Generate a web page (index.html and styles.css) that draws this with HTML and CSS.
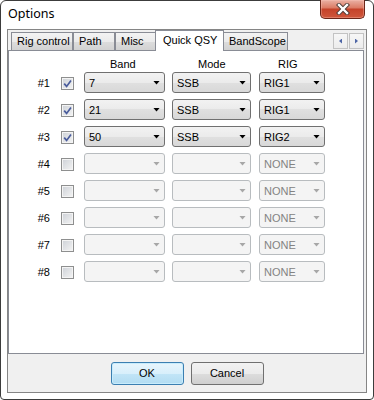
FILE: index.html
```html
<!DOCTYPE html>
<html>
<head>
    <title>Options</title>
    <link rel="stylesheet" href="styles.css">
</head>
<body>
    <div class="window">
        <div class="titlebar">
            <span class="title">Options</span>
            <button class="close">
                <svg width="14" height="12" viewBox="0 0 14 12">
                    <path d="M3 2 L11 10 M11 2 L3 10" stroke="#4b3a36" stroke-width="4.2" stroke-linecap="square" fill="none"/>
                    <path d="M3 2 L11 10 M11 2 L3 10" stroke="#ffffff" stroke-width="2.4" stroke-linecap="square" fill="none"/>
                </svg>
            </button>
        </div>

        <div class="client">
            <div class="tabs">
                <div class="tab w-rig">Rig control</div>
                <div class="tab w-path">Path</div>
                <div class="tab w-misc">Misc</div>
                <div class="tab selected">Quick QSY</div>
                <div class="tab w-band">BandScope</div>
                <div class="tab-scroll">
                    <span class="scroll-btn"><i class="arrow-left"></i></span>
                    <span class="scroll-btn"><i class="arrow-right"></i></span>
                </div>
            </div>

            <div class="panel">
                <div class="row head">
                    <span></span>
                    <span></span>
                    <span class="h-band">Band</span>
                    <span class="h-mode">Mode</span>
                    <span class="h-rig">RIG</span>
                </div>
                <div class="rows" id="rows"></div>
            </div>

            <div class="buttons">
                <button class="btn default">OK</button>
                <button class="btn">Cancel</button>
            </div>
        </div>
    </div>

    <script>
        // Quick QSY slots: the first three are set up, the rest are empty
        const slots = [
            { band: "7", mode: "SSB", rig: "RIG1", on: true },
            { band: "21", mode: "SSB", rig: "RIG1", on: true },
            { band: "50", mode: "SSB", rig: "RIG2", on: true },
            { band: "", mode: "", rig: "NONE", on: false },
            { band: "", mode: "", rig: "NONE", on: false },
            { band: "", mode: "", rig: "NONE", on: false },
            { band: "", mode: "", rig: "NONE", on: false },
            { band: "", mode: "", rig: "NONE", on: false }
        ];

        const tick = '<svg width="9" height="9" viewBox="0 0 9 9"><path d="M1.2 4.6 L3.6 7.4 L8 1.4" stroke="#4a5c9c" stroke-width="1.7" fill="none"/></svg>';

        function combo(cls, text, on) {
            return `<div class="combo ${cls}${on ? "" : " disabled"}"><span>${text}</span></div>`;
        }

        let html = "";
        slots.forEach((s, i) => {
            html += `<div class="row">
                <span class="num">#${i + 1}</span>
                <span class="check">${s.on ? tick : ""}</span>
                ${combo("c-band", s.band, s.on)}
                ${combo("c-mode", s.mode, s.on)}
                ${combo("c-rig", s.rig, s.on)}
            </div>`;
        });
        document.getElementById("rows").innerHTML = html;
    </script>
</body>
</html>
```

FILE: styles.css
```css
* {
    box-sizing: border-box;
}
body {
    margin: 0;
    background: #ffffff;
    font-family: "Liberation Sans", Arial, sans-serif;
    font-size: 11px;
    color: #000;
}
.window {
    width: 374px;
    height: 400px;
    border: 1px solid #3c3c3c;
    border-radius: 6px 6px 4px 4px;
    background: #ffffff;
    display: flex;
    flex-direction: column;
}
.titlebar {
    height: 28px;
    display: flex;
    justify-content: space-between;
    align-items: flex-start;
    padding-left: 7px;
}
.title {
    font-family: "Noto Sans", sans-serif;
    font-size: 12.5px;
    line-height: 1;
    margin-top: 7px;
}
.close {
    width: 45px;
    height: 19px;
    margin: -1px 8px 0 0;
    padding: 0;
    border: 1px solid #6b2619;
    border-top: none;
    border-radius: 0 0 5px 5px;
    background: linear-gradient(#eab1a4, #dc7d67 42%, #c5432a 52%, #cf573c);
    box-shadow: inset 0 0 0 1px rgba(255, 200, 190, 0.35);
    display: flex;
    align-items: center;
    justify-content: center;
}
.close svg {
    display: block;
}
.client {
    flex: 1;
    margin: 0 6px 6px;
    border: 1px solid #858585;
    background: #f0f0f0;
    display: flex;
    flex-direction: column;
}

/* tab strip */
.tabs {
    height: 20px;
    display: flex;
    align-items: flex-end;
    padding-left: 3px;
    margin-right: 2px;
}
.tab {
    height: 18px;
    border: 1px solid #898c95;
    border-bottom: none;
    background: linear-gradient(#f3f3f3, #ebebeb 50%, #dddddd 50%, #d2d2d2);
    line-height: 17px;
    padding-left: 5px;
    white-space: nowrap;
}
.w-rig { width: 62px; }
.w-path { width: 42px; }
.w-misc { width: 41px; }
.w-band { width: 65px; }
.tab.selected {
    width: 69px;
    height: 21px;
    margin: 0 -1px -1px -1px;
    padding-left: 7px;
    line-height: 18px;
    background: #ffffff;
    position: relative;
    z-index: 1;
}
.tab-scroll {
    margin-left: auto;
    margin-bottom: 1px;
    display: flex;
}
.scroll-btn {
    width: 15px;
    height: 16px;
    border: 1px solid #c3c3c3;
    background: linear-gradient(#f7f7f7, #ececec);
    display: flex;
    align-items: center;
    justify-content: center;
}
.scroll-btn + .scroll-btn {
    margin-left: 1px;
}
.arrow-left,
.arrow-right {
    width: 3px;
    height: 5px;
    background: #4e66a6;
}
.arrow-left {
    clip-path: polygon(100% 0, 100% 100%, 0 50%);
}
.arrow-right {
    clip-path: polygon(0 0, 0 100%, 100% 50%);
}

/* page */
.panel {
    flex: 0 0 304px;
    margin-right: 2px;
    border: 1px solid #898c95;
    background: #ffffff;
    padding-top: 7px;
}
.row {
    display: grid;
    grid-template-columns: 52px 23px 88px 87px 66px;
    align-items: center;
    height: 21px;
}
.row.head {
    height: 13px;
    line-height: 13px;
    margin-bottom: 1px;
}
.h-band { padding-left: 26px; }
.h-mode { padding-left: 26px; }
.h-rig { padding-left: 19px; }
.rows {
    display: flex;
    flex-direction: column;
    gap: 6px;
}
.num {
    text-align: right;
    padding-right: 11px;
}
.check {
    width: 13px;
    height: 13px;
    margin-top: 1px;
    border: 1px solid #8e8f8f;
    background: linear-gradient(135deg, #cdd1d7, #f4f4f4);
    box-shadow: inset 0 0 0 1px #f4f4f4;
    display: flex;
    align-items: center;
    justify-content: center;
}
.check svg {
    display: block;
}
.combo {
    height: 21px;
    border: 1px solid #707070;
    border-radius: 3px;
    background: linear-gradient(#f2f2f2, #ebebeb 50%, #e0e0e0 50%, #d8d8d8);
    display: flex;
    align-items: center;
    justify-content: space-between;
    padding: 0 4px 0 4px;
}
.combo::after {
    content: "";
    width: 7px;
    height: 4px;
    background: #000;
    clip-path: polygon(0 0, 100% 0, 50% 100%);
}
.c-band { width: 81px; }
.c-mode { width: 79px; }
.c-rig { width: 66px; }
.combo.disabled {
    border-color: #b8bcbf;
    background: #f4f4f4;
    color: #838383;
}
.combo.disabled::after {
    background: #a7a7a7;
}

/* dialog buttons */
.buttons {
    flex: 1;
    display: flex;
    justify-content: center;
    align-items: flex-start;
    gap: 7px;
    padding-top: 8px;
}
.btn {
    width: 73px;
    height: 23px;
    padding: 0 0 1px;
    border: 1px solid #707070;
    border-radius: 3px;
    background: linear-gradient(#f2f2f2, #ebebeb 50%, #dddddd 50%, #cfcfcf);
    font-family: "Liberation Sans", Arial, sans-serif;
    font-size: 11px;
    color: #000;
}
.btn.default {
    border-color: #3c7fb1;
    background: linear-gradient(#e8f5fc, #d8effb 50%, #c2e5f7 50%, #b2dcf2);
    box-shadow: inset 0 0 0 1px #c8ecfc;
}
```
